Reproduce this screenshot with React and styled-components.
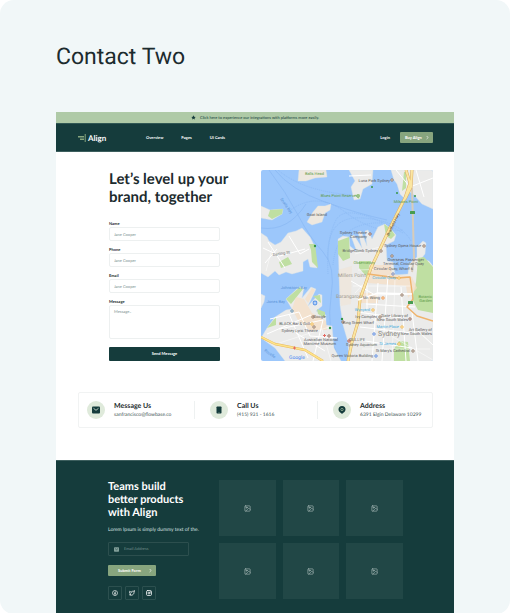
import React from "react";
import styled, { createGlobalStyle } from "styled-components";
import { Image as ImageIcon, Twitter, Instagram, ChevronRight } from "lucide-react";

const c = {
  dark: "#153c3c",
  sage: "#afcaa7",
  moss: "#87a57e",
  mist: "#f1f7f8",
  ink: "#1c2b2e",
};

const Global = createGlobalStyle`
  *, *::before, *::after { box-sizing: border-box; }
  body { margin: 0; background: #fff; }
  h1, h2, h3, p { margin: 0; }
  button, input, textarea { font-family: inherit; margin: 0; }
`;

const Canvas = styled.div`
  min-height: 100vh;
  padding: 42px 56px 0;
  border-radius: 14px;
  background: ${c.mist};
  font-family: Lato, "Open Sans", sans-serif;
  text-rendering: geometricPrecision;
  color: ${c.ink};
`;

const PageName = styled.h1`
  font: 400 23px/30px Roboto, sans-serif;
  margin-bottom: 40px;
`;

const Page = styled.div`
  background: #fff;
`;

const Banner = styled.div`
  display: flex;
  align-items: center;
  justify-content: center;
  gap: 4px;
  height: 11px;
  background: ${c.sage};
  color: ${c.dark};
  font-size: 4px;
  line-height: 6px;
`;

const Header = styled.header`
  display: flex;
  align-items: center;
  height: 29px;
  padding: 0 21px 0 22px;
  background: ${c.dark};
  border-bottom: 1px solid #3d5f5e;
  border-top: 1px solid #315854;
`;

const Brand = styled.a`
  display: flex;
  align-items: center;
  gap: 2px;
  width: 68px;
  color: #fff;
  font-size: 8px;
  font-weight: 700;
  line-height: 10px;
  text-decoration: none;
`;

const Nav = styled.nav`
  display: flex;
  gap: 18px;
  flex: 1;
`;

const NavLink = styled.a`
  color: #fff;
  font-size: 4px;
  font-weight: 700;
  line-height: 6px;
  text-decoration: none;
`;

const Pill = styled.button`
  display: flex;
  align-items: center;
  justify-content: space-between;
  width: ${(p) => p.$width}px;
  height: 11px;
  padding: 0 3px 0 ${(p) => p.$inset}px;
  border: 0;
  border-radius: 1px;
  background: ${c.moss};
  color: #fff;
  font-size: 4px;
  font-weight: 700;
  line-height: 6px;
`;

const HeaderActions = styled.div`
  display: flex;
  align-items: center;
  gap: 10px;
`;

const Hero = styled.section`
  display: grid;
  grid-template-columns: 152px 1fr;
  padding: 18px 21px 31px 53px;
`;

const HeroCopy = styled.div`
  display: flex;
  flex-direction: column;
  justify-content: space-between;
`;

const HeroTitle = styled.h2`
  font-size: 15px;
  font-weight: 700;
  line-height: 18px;
  white-space: nowrap;
`;

const Form = styled.form`
  display: flex;
  flex-direction: column;
  gap: 6px;
  width: 111px;
`;

const Field = styled.div`
  display: flex;
  flex-direction: column;
`;

const Label = styled.label`
  font-size: 4px;
  font-weight: 700;
  line-height: 6px;
`;

const controlStyle = `
  width: 100%;
  border: 1px solid #edf0f0;
  border-radius: 2px;
  background: #fff;
  color: #1c2b2e;
  padding: 0 4px;
  font-size: 4px;
  line-height: 6px;
  outline: 0;
  text-rendering: inherit;
  &::placeholder { color: #7b9090; opacity: 1; }
`;

const Input = styled.input`
  ${controlStyle}
  height: 14px;
`;

const TextArea = styled.textarea`
  ${controlStyle}
  height: 34px;
  padding-top: 3px;
  resize: none;
  display: block;
`;

const SendButton = styled.button`
  height: 14px;
  margin-top: 2px;
  border: 0;
  border-radius: 1px;
  background: ${c.dark};
  color: #fff;
  font-size: 4px;
  font-weight: 700;
  line-height: 6px;
`;

const MapFrame = styled.div`
  height: 191px;
  border-radius: 2px;
  overflow: hidden;
  svg { display: block; width: 100%; height: 100%; }
`;

const Contacts = styled.section`
  display: grid;
  grid-template-columns: 108fr 108fr 91fr;
  column-gap: 15px;
  margin: 0 21px 0 22px;
  padding: 8px;
  border: 1px solid #f1f3f3;
  border-radius: 2px;
`;

const Contact = styled.div`
  display: flex;
  align-items: center;
  gap: 9px;
  height: 18px;
  &:not(:last-child) { border-right: 1px solid #eef1f1; }
`;

const Badge = styled.div`
  display: grid;
  place-items: center;
  flex: none;
  width: 18px;
  height: 18px;
  border-radius: 50%;
  background: #dfeadb;
`;

const ContactTitle = styled.h3`
  font-size: 7px;
  font-weight: 700;
  line-height: 10px;
  white-space: nowrap;
`;

const ContactText = styled.p`
  color: #3f5555;
  font-size: 5px;
  line-height: 8px;
  white-space: nowrap;
`;

const Footer = styled.footer`
  display: grid;
  grid-template-columns: 111px 1fr;
  margin-top: 32px;
  padding: 19px 51px 14px 52px;
  border-top: 1px solid #3d5f5e;
  background: ${c.dark};
  color: #fff;
`;

const FooterCopy = styled.div`
  display: flex;
  flex-direction: column;
  align-items: flex-start;
`;

const FooterTitle = styled.h2`
  font-size: 11px;
  font-weight: 700;
  line-height: 13px;
  white-space: nowrap;
`;

const FooterText = styled.p`
  margin: 7px 0 8px;
  font-size: 5px;
  line-height: 8px;
  color: #d8e2e1;
  white-space: nowrap;
`;

const EmailBox = styled.label`
  display: flex;
  align-items: center;
  gap: 5px;
  width: 81px;
  height: 14px;
  margin-bottom: 9px;
  padding: 0 5px;
  border: 1px solid #2c4f4e;
  border-radius: 1px;
`;

const EmailInput = styled.input`
  flex: 1;
  min-width: 0;
  padding: 0;
  border: 0;
  outline: 0;
  background: transparent;
  color: #fff;
  font-size: 4px;
  line-height: 6px;
  text-rendering: inherit;
  &::placeholder { color: #6f8c8a; opacity: 1; }
`;

const Socials = styled.div`
  display: flex;
  gap: 3px;
  margin-top: 10px;
`;

const Social = styled.a`
  display: grid;
  place-items: center;
  width: 14px;
  height: 14px;
  border: 1px solid #2c504f;
  border-radius: 1px;
  color: #fff;
`;

const Gallery = styled.div`
  display: grid;
  grid-template-columns: repeat(3, 1fr);
  gap: 7px;
  align-content: start;
`;

const Tile = styled.div`
  display: grid;
  place-items: center;
  height: 56px;
  background: #214746;
  color: #b5c4c2;
`;

const MapText = styled.text`
  font-family: Roboto, sans-serif;
  font-size: ${(p) => p.$size || 4}px;
  fill: ${(p) => p.$fill || "#5a5a5a"};
  text-anchor: ${(p) => p.$anchor || "start"};
`;

const GREEN = "#5d9a45";
const BLUE = "#5b93d8";
const CYAN = "#3eaadb";

const labels = [
  ["Balls Head", 63, 5, GREEN],
  ["Blues Point Reserve", 95, 27, GREEN],
  ["Goat Island", 66, 46],
  ["Luna Park Sydney", 129, 12],
  ["Milsons Point", 157, 33, GREEN],
  ["Sydney Theatre", 106, 64],
  ["Company", 106, 68],
  ["BridgeClimb Sydney", 117, 82],
  ["Sydney Opera House", 160, 77],
  ["Overseas Passenger", 163, 91],
  ["Terminal, Circular Quay", 163, 95],
  ["Observatory", 114, 94, GREEN],
  ["Circular Quay, Wharf 6", 152, 100],
  ["Circular Quay", 135, 109, CYAN],
  ["Johnstons Bay", 46, 119, BLUE],
  ["Jones Bay", 24, 133, BLUE],
  ["Google", 65, 148],
  ["BLACK Bar & Grill", 49, 155],
  ["Sydney Lyric Theatre", 57, 162],
  ["Australian National", 77, 171],
  ["Maritime Museum", 75, 175],
  ["Mr. Wong", 119, 129],
  ["Wynyard", 109, 141, CYAN],
  ["Ivy Complex", 116, 148],
  ["King Street Wharf", 113, 154],
  ["State Library of", 147, 147],
  ["New South Wales", 147, 151],
  ["Martin Place", 138, 158, CYAN],
  ["SEA LIFE", 104, 171],
  ["Sydney Aquarium", 116, 176],
  ["St James", 135, 175, CYAN],
  ["St Mary's Cathedral", 149, 182],
  ["Queen Victoria Building", 112, 187],
  ["Art Gallery of", 171, 161],
  ["New South Wales", 171, 165],
  ["Botanic", 171, 128, GREEN],
  ["Garden", 171, 132, GREEN],
];

const pins = [
  [131, 10, "#8b6d57"], [97, 26, GREEN], [109, 64, "#8b5a4b"], [120, 81, "#8b6d57"],
  [163, 76, "#8b6d57"], [131, 86, "#8b6d57"], [132, 104, "#687bb0"], [138, 108, "#f0b23f"],
  [31, 141, "#5686a7"], [52, 147, "#8b6d57"], [53, 157, "#8b6d57"], [51, 154, "#f0b23f"],
  [68, 166, "#8b5a4b"], [122, 128, "#ee8a35"], [141, 125, "#8b6d57"], [112, 140, "#f0b23f"],
  [119, 147, "#8b6d57"], [149, 149, "#8b5a4b"], [141, 157, "#f0b23f"], [113, 164, "#4d80dd"],
  [88, 171, "#b04738"], [138, 174, "#f0b23f"], [152, 181, "#8b6d57"], [115, 186, "#4d80dd"],
  [82, 152, "#8b6d57"],
];

function HarbourMap() {
  return (
    <svg viewBox="0 0 172 191" preserveAspectRatio="xMidYMid slice" role="img" aria-label="Map of Sydney harbour">
      <rect width="172" height="191" fill="#9cc7fb" />
      <g fill="none" stroke="#86b6f2" strokeWidth=".6">
        <path d="M8 0Q25 22 37 45T62 82T70 127T78 191M14 0Q30 20 64 32T126 50M0 58Q27 62 45 34" />
        <path strokeDasharray="1 1" d="M17 0Q43 22 93 25M67 89Q65 45 102 48T150 71M72 95Q76 51 122 53M27 42Q55 20 84 42T142 60M67 104Q65 69 75 50T142 63" />
      </g>
      <g fill="#ebebea" stroke="#d9e2e8" strokeWidth=".4">
        <path fill="#eee8df" d="M38 0H65L66 7L54 8L45 11H37Z" />
        <path d="M88 0H112L111 14L102 19L99 29L93 30L90 17L94 11Z" />
        <path d="M130 0H172V39L161 34L153 25L149 22L144 29L139 24L136 14L133 10Z" />
        <path fill="#eee8df" d="M57 36L64 36L70 34L69 40L64 43L61 52L51 55L46 52L52 42Z" />
        <path d="M0 36L9 40L22 39L21 44L11 50L0 48Z" />
        <path d="M0 63L6 67L8 71L14 75L20 72L27 63L35 61L41 58L49 67L53 75L56 98L49 97L47 89L42 92V101L31 104L25 102L18 105L14 101L7 107L0 103Z" />
        <path d="M0 124L4 126L3 132L0 138Z" />
        <path d="M25 129L38 117L43 117L41 128L50 117L55 119L47 136L58 124L61 125V136L55 141L65 145L65 155L71 156L73 178L80 191H24L14 178L0 168L6 158L14 147L25 140L31 139Z" />
        <path d="M77 69L82 66L88 67L89 76L96 82L90 66L93 65L101 78L97 62L100 61L106 76L104 61L107 60L111 69L117 57L124 54L129 58L135 65L133 71L125 75L126 91L132 92L134 105L147 104L148 94L156 87L156 77L162 71L165 73L164 84L160 89L168 91L172 96V191H88L87 172L82 155L79 135Z" />
      </g>
      <g fill="#bfdfa2">
        <path d="M9 40L22 39L21 44L11 49L7 46ZM48 74H54L57 98L51 92L50 80ZM77 71L88 67L89 88L82 91L77 84ZM18 92L27 87L31 94L20 98ZM25 129L39 117L42 119L30 134ZM52 126L59 125L60 133ZM6 158L15 147L15 155ZM93 25L99 24L98 29ZM143 2H145V18L141 21ZM123 54L129 58L134 65L130 69L125 66ZM157 88L163 87L172 97V143L157 140L151 129L155 112ZM98 91L110 91L106 107L98 98ZM133 179L138 171L147 172L149 191H133ZM56 139L64 142V148L57 144Z" />
      </g>
      <g fill="#f5dfc5">
        <path d="M108 95H130L131 104L151 107L156 118L147 128L145 116L107 113ZM98 122L117 124V133H99ZM31 139L35 127L43 129L51 143L65 151L66 160L48 160L37 150ZM44 129L51 118L54 120L47 133Z" opacity=".75" />
        <path d="M77 100L91 96L90 134L80 136Z" opacity=".3" />
      </g>
      <g fill="none" stroke="#fff" strokeWidth="1">
        <path d="M2 78L19 86L44 79M28 66L39 84L48 79M4 93L16 79M7 72L24 98M9 149L38 142L49 166L76 168M18 159L62 150L52 191M28 144L47 188M6 164L50 145M35 163L64 181M90 111L114 125L151 124M96 142L141 148M99 157L151 163M91 169L151 178M117 113L111 191M127 105L121 191M140 117L145 191M106 107V141M105 134L154 137M157 161L172 175M151 142L157 191M135 0L149 17L172 8M155 0L163 27M88 6L110 5" />
        <path strokeWidth=".5" d="M92 116L151 116M94 123L109 107M99 137L132 167L172 190M101 179H169M134 109L131 191M94 84L122 76M97 100L125 99M11 79L5 101M12 175L68 157M60 156L70 191" />
      </g>
      <g fill="none" strokeLinejoin="round">
        <path d="M151 18L153 88L151 102" stroke="#d8ccb9" strokeWidth="2" />
        <path d="M145 0L149 13L144 28L127 62L110 98L99 129L97 152L91 172L87 191M151 0L150 17L144 29" stroke="#dcae64" strokeWidth="3" />
        <path d="M145 0L149 13L144 28L127 62L110 98L99 129L97 152L91 172L87 191M151 0L150 17L144 29" stroke="#fbe6a1" strokeWidth="2" />
        <path d="M0 167L14 174L44 180L62 191" stroke="#e9b95e" strokeWidth="2.5" />
        <path d="M0 167L14 174L44 180L62 191" stroke="#fde38a" strokeWidth="1.5" />
        <path d="M107 104L137 108L149 107L152 129L146 137L156 146L172 151" stroke="#efb36c" strokeWidth="1.4" />
        <path d="M97 130L117 123L151 124" stroke="#fff" strokeWidth="1.6" />
      </g>
      <g>
        <rect x="149" y="41" width="5" height="3" rx=".5" fill="#479c50" />
        <rect x="147" y="131" width="5" height="3" rx=".5" fill="#479c50" />
        <circle cx="54" cy="76" r="1.2" fill="#349447" />
        <circle cx="111" cy="17" r="1" fill="#349447" />
        <circle cx="136" cy="23" r="1" fill="#349447" />
        <circle cx="154" cy="26" r="1" fill="#349447" />
        <circle cx="69" cy="158" r="1.2" fill="#349447" />
        <circle cx="81" cy="149" r="1.2" fill="#349447" />
        <circle cx="54" cy="133" r="2.4" fill="#5794e8" />
        <path d="M52.5 133H55.5M54 131.5V134.5" stroke="#fff" strokeWidth=".7" />
        <path d="M62 165.500H65M63.500 164V167M32 178H35M33.500 176.500V179.500" stroke="#e46962" strokeWidth="1" />
      </g>
      {pins.map(([x, y, fill]) => (
        <circle key={`${x}-${y}`} cx={x} cy={y} r="1.2" fill="#fff" stroke={fill} strokeWidth=".9" />
      ))}
      {labels.map(([text, x, y, fill]) => (
        <MapText key={`${text}-${y}`} x={x} y={y} $fill={fill} $anchor="end">{text}</MapText>
      ))}
      <MapText x="77" y="107" $size={5} $fill="#a09a90">Millers Point</MapText>
      <MapText x="75" y="128" $size={5} $fill="#a09a90">Barangaroo</MapText>
      <MapText x="117" y="166" $size={7} $fill="#8a8780">Sydney</MapText>
      <MapText x="12" y="86" $fill="#777" transform="rotate(-8 12 86)">Darling St</MapText>
      <MapText x="19" y="29" $fill={BLUE} transform="rotate(55 19 29)">Snails Bay</MapText>
      <MapText x="3" y="181" $fill={BLUE} transform="rotate(35 3 181)">Rozelle</MapText>
      <MapText x="128" y="66" $fill="#6e5c41" transform="rotate(-64 128 66)">Bradfield Hwy</MapText>
      <MapText x="28" y="189" $size={5} $fill="#4285f4">Google</MapText>
    </svg>
  );
}

const Star = () => (
  <svg width="5" height="5" viewBox="0 0 24 24" fill="currentColor" aria-hidden="true">
    <path d="M12 1.500l3.200 6.700 7.300 1-5.300 5.100 1.300 7.300L12 18.100l-6.500 3.500 1.300-7.300L1.500 9.200l7.300-1z" />
  </svg>
);

const Logo = () => (
  <svg width="8" height="8" viewBox="0 0 8 8" aria-hidden="true">
    <path d="M0 2H6V3.500H0ZM2 4.500H6V6H2Z" fill={c.moss} />
    <path d="M6.700 0H7.700V8H6.700Z" fill={c.moss} />
  </svg>
);

const MailIcon = ({ size, color, line }) => (
  <svg width={size} height={size} viewBox="0 0 8 8" aria-hidden="true">
    <rect y=".5" width="8" height="7" rx="1" fill={color} />
    <path d="M1.500 2.300L4 4.300L6.500 2.300" fill="none" stroke={line} strokeWidth=".8" />
  </svg>
);

const PhoneIcon = () => (
  <svg width="8" height="8" viewBox="0 0 8 8" aria-hidden="true">
    <rect x="1.500" y=".5" width="5" height="7" rx=".7" fill={c.dark} />
    <path d="M3.500 6.500H4.500" stroke="#a9c3a4" strokeWidth=".5" />
  </svg>
);

const PinIcon = () => (
  <svg width="8" height="8" viewBox="0 0 8 8" aria-hidden="true">
    <path d="M4 0a3.500 3.500 0 0 1 3.500 3.500C7.500 5.300 6 6.300 5 7L4 8L3 7C2 6.300 .5 5.300 .5 3.500A3.500 3.500 0 0 1 4 0Z" fill={c.dark} />
    <circle cx="4" cy="3.500" r="1.200" fill="none" stroke="#a9c3a4" strokeWidth=".7" />
  </svg>
);

const FacebookIcon = () => (
  <svg width="6" height="6" viewBox="0 0 24 24" fill="none" stroke="currentColor" strokeWidth="2.500" aria-hidden="true">
    <circle cx="12" cy="12" r="10" />
    <path d="M12 22V10q0-3 4-3M8 13h8" />
  </svg>
);

const fields = [
  { id: "name", label: "Name", type: "text" },
  { id: "phone", label: "Phone", type: "tel" },
  { id: "email", label: "Email", type: "email" },
];

const contacts = [
  { title: "Message Us", text: "sanfrancisco@flowbase.co", icon: <MailIcon size={8} color={c.dark} line="#dfeadb" /> },
  { title: "Call Us", text: "(415) 931 - 1616", icon: <PhoneIcon /> },
  { title: "Address", text: "6391 Elgin Delaware 10299", icon: <PinIcon /> },
];

const tiles = [1, 2, 3, 4, 5, 6];

export default function App() {
  return (
    <>
      <Global />
      <Canvas>
        <PageName>Contact Two</PageName>
        <Page>
          <Banner>
            <Star />
            <span>Click here to experience our integrations with platforms more easily.</span>
          </Banner>
          <Header>
            <Brand href="#"><Logo />Align</Brand>
            <Nav>
              <NavLink href="#">Overview</NavLink>
              <NavLink href="#">Pages</NavLink>
              <NavLink href="#">UI Cards</NavLink>
            </Nav>
            <HeaderActions>
              <NavLink href="#">Login</NavLink>
              <Pill type="button" $width={33} $inset={5}>Buy Align<ChevronRight size={5} strokeWidth={3} /></Pill>
            </HeaderActions>
          </Header>
          <Hero>
            <HeroCopy>
              <HeroTitle>Let’s level up your<br />brand, together</HeroTitle>
              <Form>
                {fields.map((f) => (
                  <Field key={f.id}>
                    <Label htmlFor={f.id}>{f.label}</Label>
                    <Input id={f.id} type={f.type} placeholder="Jane Cooper" />
                  </Field>
                ))}
                <Field>
                  <Label htmlFor="message">Message</Label>
                  <TextArea id="message" placeholder="Message.." />
                </Field>
                <SendButton type="button">Send Message</SendButton>
              </Form>
            </HeroCopy>
            <MapFrame><HarbourMap /></MapFrame>
          </Hero>
          <Contacts>
            {contacts.map((item) => (
              <Contact key={item.title}>
                <Badge>{item.icon}</Badge>
                <div>
                  <ContactTitle>{item.title}</ContactTitle>
                  <ContactText>{item.text}</ContactText>
                </div>
              </Contact>
            ))}
          </Contacts>
          <Footer>
            <FooterCopy>
              <FooterTitle>Teams build<br />better products<br />with Align</FooterTitle>
              <FooterText>Lorem Ipsum is simply dummy text of the.</FooterText>
              <EmailBox>
                <MailIcon size={5} color="#83a09a" line={c.dark} />
                <EmailInput type="email" placeholder="Email Address" aria-label="Email Address" />
              </EmailBox>
              <Pill type="button" $width={48} $inset={10}>Submit Form<ChevronRight size={5} strokeWidth={3} /></Pill>
              <Socials>
                <Social href="#" aria-label="Facebook"><FacebookIcon /></Social>
                <Social href="#" aria-label="Twitter"><Twitter size={6} strokeWidth={3} /></Social>
                <Social href="#" aria-label="Instagram"><Instagram size={6} strokeWidth={3} /></Social>
              </Socials>
            </FooterCopy>
            <Gallery>
              {tiles.map((n) => (
                <Tile key={n}><ImageIcon size={7} strokeWidth={2} aria-hidden="true" /></Tile>
              ))}
            </Gallery>
          </Footer>
        </Page>
      </Canvas>
    </>
  );
}
